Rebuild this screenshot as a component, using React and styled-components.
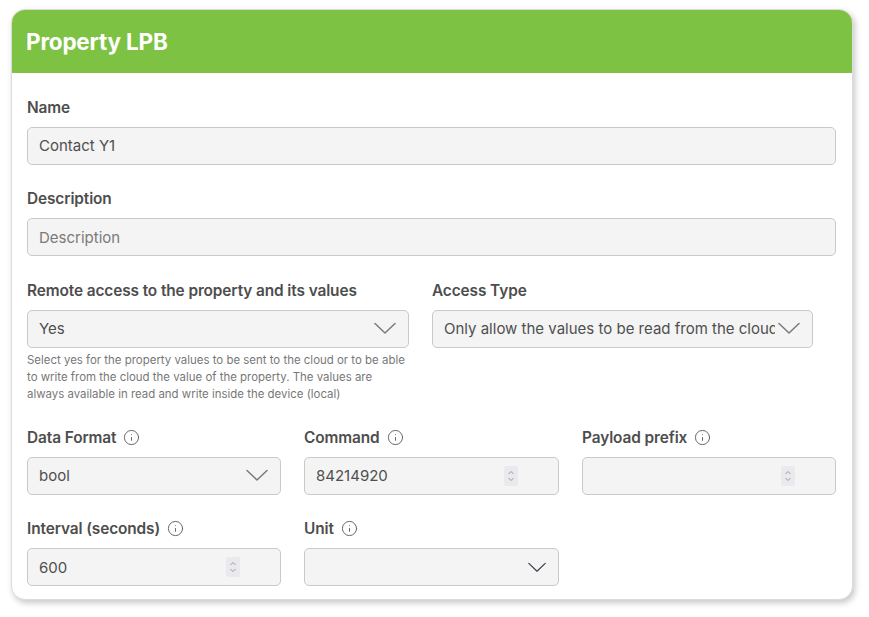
import React from 'react';
import styled, { createGlobalStyle } from 'styled-components';
import { Info } from 'lucide-react';

const GlobalStyle = createGlobalStyle`
  body {
    margin: 0;
    background: #fff;
    font-family: Inter, "Noto Sans", "Liberation Sans", sans-serif;
  }
`;

const Page = styled.div`
  padding: 9px 0 16px 11px;
`;

const Card = styled.div`
  width: 842px;
  height: 591px;
  box-sizing: border-box;
  border: 1px solid #dcdcdc;
  border-radius: 14px;
  background: #fff;
  overflow: hidden;
  box-shadow: 2px 3px 6px rgba(0, 0, 0, 0.22);
`;

const Header = styled.div`
  height: 64px;
  background: #7dc242;
  display: flex;
  align-items: center;
  padding: 0 15px;
  margin: -1px -1px 0;
`;

const Title = styled.h1`
  margin: 0;
  color: #fff;
  font-size: 22.5px;
  font-weight: 700;
  letter-spacing: -0.2px;
`;

const Body = styled.div`
  padding: 25px 16px 0 15px;
  display: flex;
  flex-direction: column;
  gap: 25px;
`;

const Row = styled.div`
  display: grid;
  grid-template-columns: ${p => p.$cols};
  column-gap: 23px;
`;

const Field = styled.div`
  display: flex;
  flex-direction: column;
  min-width: 0;
`;

const Label = styled.label`
  display: flex;
  align-items: center;
  gap: 7px;
  height: 18px;
  margin-bottom: 10.5px;
  font-size: 15.4px;
  font-weight: 600;
  color: #4d4d4d;
  letter-spacing: -0.1px;
`;

const Box = styled.div`
  height: 38px;
  box-sizing: border-box;
  border: 1px solid #c9c9c9;
  border-radius: 5px;
  background: #f4f4f4;
  display: flex;
  align-items: center;
  padding: 0 12px 0 11px;
  font-size: 15px;
  color: ${p => (p.$placeholder ? '#7a7a7a' : '#4f4f4f')};
  overflow: hidden;
`;

const Value = styled.span`
  flex: 1;
  white-space: nowrap;
  overflow: hidden;
  text-overflow: clip;
  margin-right: 3px;
`;

const Help = styled.p`
  margin: 4px 0 0;
  font-size: 11.45px;
  line-height: 17.3px;
  color: #777;
`;

const Spinner = styled.div`
  width: 14px;
  height: 20px;
  margin-right: 28px;
  background: #e9e9ee;
  border-radius: 2px;
  display: flex;
  align-items: center;
  justify-content: center;
`;

const Chevron = ({ w = 22, color = '#7a7a7a' }) => (
  <svg width={w} height={w / 2 + 2} viewBox="0 0 22 12" fill="none">
    <polyline points="1,1 11,10.5 21,1" stroke={color} strokeWidth="1.5" strokeLinecap="round" strokeLinejoin="round" />
  </svg>
);

const SpinIcon = () => (
  <Spinner>
    <svg width="8" height="14" viewBox="0 0 8 14" fill="none">
      <polyline points="1.5,5 4,2.5 6.5,5" stroke="#9a9aa0" strokeWidth="1" />
      <polyline points="1.5,9 4,11.5 6.5,9" stroke="#9a9aa0" strokeWidth="1" />
    </svg>
  </Spinner>
);

const InfoIcon = () => <Info size={17} strokeWidth={1.3} color="#5a5a5a" />;

export default function App() {
  return (
    <Page>
      <GlobalStyle />
      <Card>
        <Header>
          <Title>Property LPB</Title>
        </Header>
        <Body>
          <Field>
            <Label>Name</Label>
            <Box><Value>Contact Y1</Value></Box>
          </Field>
          <Field>
            <Label>Description</Label>
            <Box $placeholder><Value>Description</Value></Box>
          </Field>
          <Row $cols="382px 381px">
            <Field>
              <Label>Remote access to the property and its values</Label>
              <Box>
                <Value>Yes</Value>
                <Chevron />
              </Box>
              <Help>
                Select yes for the property values to be sent to the cloud or to be able to write from the cloud the value of the property. The values are always available in read and write inside the device (local)
              </Help>
            </Field>
            <Field>
              <Label>Access Type</Label>
              <Box>
                <Value>Only allow the values to be read from the cloud</Value>
                <Chevron />
              </Box>
            </Field>
          </Row>
          <Row $cols="254px 255px 254px">
            <Field>
              <Label>Data Format <InfoIcon /></Label>
              <Box>
                <Value>bool</Value>
                <Chevron />
              </Box>
            </Field>
            <Field>
              <Label>Command <InfoIcon /></Label>
              <Box>
                <Value>84214920</Value>
                <SpinIcon />
              </Box>
            </Field>
            <Field>
              <Label>Payload prefix <InfoIcon /></Label>
              <Box>
                <Value></Value>
                <SpinIcon />
              </Box>
            </Field>
          </Row>
          <Row $cols="254px 255px 254px">
            <Field>
              <Label>Interval (seconds) <InfoIcon /></Label>
              <Box>
                <Value>600</Value>
                <SpinIcon />
              </Box>
            </Field>
            <Field>
              <Label>Unit <InfoIcon /></Label>
              <Box>
                <Value></Value>
                <Chevron w={18} color="#3f3f4a" />
              </Box>
            </Field>
          </Row>
        </Body>
      </Card>
    </Page>
  );
}
